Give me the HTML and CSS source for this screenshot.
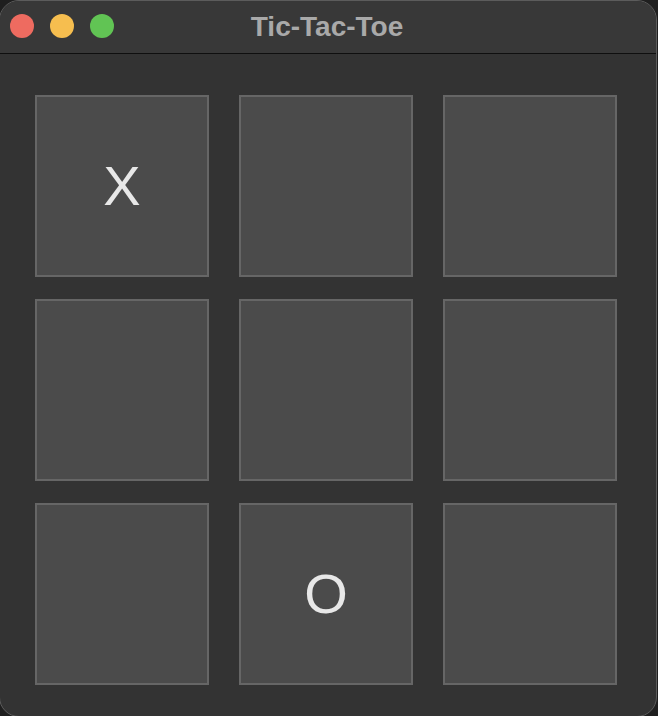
FILE: index.html
```html
<!DOCTYPE html>
<html>
<head>
<meta charset="utf-8">
<link rel="stylesheet" href="styles.css">
</head>
<body>
<div class="window">
  <div class="titlebar">
    <div class="lights">
      <span class="light red"></span>
      <span class="light yellow"></span>
      <span class="light green"></span>
    </div>
    <div class="title">Tic-Tac-Toe</div>
  </div>
  <div class="content">
    <div class="board">
      <div class="cell">X</div>
      <div class="cell"></div>
      <div class="cell"></div>
      <div class="cell"></div>
      <div class="cell"></div>
      <div class="cell"></div>
      <div class="cell"></div>
      <div class="cell">O</div>
      <div class="cell"></div>
    </div>
  </div>
</div>
</body>
</html>
```
FILE: styles.css
```css
html, body {
  margin: 0;
  padding: 0;
  background: #1f1f1f;
  width: 658px;
  height: 716px;
  overflow: hidden;
}
.window {
  width: 658px;
  height: 717px;
  margin-left: -1px;
  box-sizing: border-box;
  border: 1px solid #5c5c5c;
  border-radius: 20px;
  overflow: hidden;
  background: #333333;
  display: flex;
  flex-direction: column;
}
.titlebar {
  height: 52px;
  flex: 0 0 52px;
  background: #383838;
  border-bottom: 1px solid #0f0f0f;
  position: relative;
  display: flex;
  align-items: center;
  justify-content: center;
}
.lights {
  position: absolute;
  left: 10px;
  top: 13px;
  display: flex;
  gap: 16px;
}
.light {
  width: 24px;
  height: 24px;
  border-radius: 50%;
  display: block;
}
.red { background: #ee6b60; }
.yellow { background: #f6be4f; }
.green { background: #61c454; }
.title {
  font-family: "Liberation Sans", Arial, sans-serif;
  font-weight: bold;
  font-size: 28px;
  color: #a9a9a9;
  margin-left: -2px;
  margin-top: 0;
}
.content {
  flex: 1;
  padding: 41px 0 0 35px;
}
.board {
  display: grid;
  grid-template-columns: repeat(3, 174px);
  grid-template-rows: repeat(3, 182px);
  column-gap: 30px;
  row-gap: 22px;
}
.cell {
  box-sizing: border-box;
  background: #4b4b4b;
  border: 2px solid #666666;
  display: flex;
  align-items: center;
  justify-content: center;
  font-family: "Liberation Sans", Arial, sans-serif;
  font-size: 56px;
  color: #e8e8e8;
  line-height: 1;
}
```
